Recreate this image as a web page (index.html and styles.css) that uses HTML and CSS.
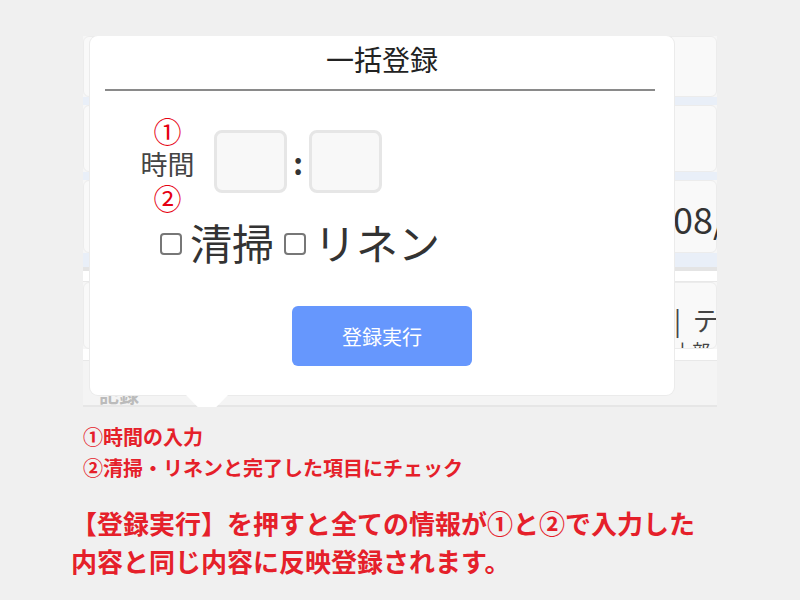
FILE: index.html
```html
<!DOCTYPE html>
<html lang="ja">
<head>
    <meta charset="UTF-8">
    <meta name="viewport" content="width=device-width, initial-scale=1.0">
    <title>一括登録</title>
    <link rel="stylesheet" href="styles.css">
</head>
<body>
    <div class="page">
        <!-- Screen behind the modal -->
        <div class="screen">
            <div class="bg-row"></div>
            <div class="bg-strip"></div>
            <div class="bg-row bg-row-mid"></div>
            <div class="bg-strip"></div>
            <div class="bg-row bg-row-date"><span class="bg-date">08/</span></div>
            <div class="bg-strip bg-strip-wide"></div>
            <div class="bg-gap"></div>
            <div class="bg-row bg-row-text">
                <span class="bg-label">| テ</span>
                <span class="bg-small">上部</span>
            </div>
            <div class="bg-gap"></div>
            <div class="bg-foot"><span class="bg-foot-text">記録</span></div>

            <!-- Bulk registration modal -->
            <div class="modal">
                <h2 class="modal-title">一括登録</h2>
                <div class="modal-line"></div>

                <div class="time-row">
                    <div class="label-col">
                        <span class="num">①</span>
                        <span class="time-label">時間</span>
                        <span class="num num-two">②</span>
                    </div>
                    <div class="time-inputs">
                        <div class="time-box"></div>
                        <span class="colon">:</span>
                        <div class="time-box"></div>
                    </div>
                </div>

                <div class="check-row">
                    <span class="check"></span>
                    <span class="check-label">清掃</span>
                    <span class="check check-second"></span>
                    <span class="check-label">リネン</span>
                </div>

                <div class="button-row">
                    <button class="submit">登録実行</button>
                </div>
            </div>
        </div>

        <div class="notes">
            <p>①時間の入力</p>
            <p>②清掃・リネンと完了した項目にチェック</p>
        </div>

        <div class="summary">
            <p>【登録実行】を押すと全ての情報が①と②で入力した</p>
            <p>内容と同じ内容に反映登録されます。</p>
        </div>
    </div>
</body>
</html>
```

FILE: styles.css
```css
body {
    margin: 0;
    background-color: #f0f0f0;
    font-family: "Noto Sans CJK JP", "Noto Sans", sans-serif;
}
.page {
    padding-top: 36px;
}
p {
    margin: 0;
}

/* background screen */
.screen {
    position: relative;
    margin-left: 83px;
    width: 634px;
    height: 371px;
    background-color: #f6f6f6;
    overflow: hidden;
    display: flex;
    flex-direction: column;
}
.bg-row {
    height: 64px;
    background-color: #f9f9f9;
    border: 1px solid #ececec;
    border-radius: 6px;
    box-sizing: border-box;
}
.bg-row-mid {
    height: 70px;
}
.bg-row-date {
    height: 76px;
    padding-left: 589px;
    padding-top: 4px;
    font-size: 36px;
    line-height: 66px;
    color: #333;
    white-space: nowrap;
}
.bg-strip {
    height: 8px;
    background-color: #e9eff8;
}
.bg-strip-wide {
    height: 18px;
    border-bottom: 4px solid #e4e4e4;
    box-sizing: border-box;
}
.bg-gap {
    height: 12px;
    background-color: #fff;
    border-bottom: 1px solid #e8e8e8;
    box-sizing: border-box;
}
.bg-row-text {
    height: 70px;
    display: flex;
    flex-direction: column;
    padding-left: 590px;
    white-space: nowrap;
    color: #444;
    overflow: hidden;
}
.bg-label {
    font-size: 26px;
    line-height: 26px;
    margin-top: 24px;
    letter-spacing: 3px;
}
.bg-small {
    font-size: 18px;
    line-height: 18px;
    margin-top: 8px;
}
.bg-foot {
    flex: 1;
    background-color: #f4f4f4;
    border-bottom: 2px solid #e6e6e6;
    box-sizing: border-box;
}
.bg-foot-text {
    display: block;
    margin: 24px 0 0 16px;
    font-size: 20px;
    font-weight: bold;
    line-height: 20px;
    color: #bbb;
}

/* modal */
.modal {
    position: absolute;
    left: 7px;
    top: 0;
    width: 584px;
    height: 359px;
    background-color: #fff;
    border-radius: 8px;
    box-shadow: 0 0 0 1px #ebebeb;
}
.modal::after {
    content: "";
    position: absolute;
    left: 96px;
    bottom: -12px;
    width: 42px;
    height: 12px;
    background-color: #fff;
    clip-path: polygon(0 0, 100% 0, 72% 100%, 28% 100%);
}
.modal-title {
    margin: 0;
    padding-top: 4px;
    font-size: 28px;
    font-weight: normal;
    line-height: 38px;
    text-align: center;
    color: #222;
}
.modal-line {
    height: 2px;
    margin: 11px 19px 0 15px;
    background-color: #8a8a8a;
}
.time-row {
    display: flex;
    align-items: flex-start;
    margin-top: 24px;
    padding-left: 49px;
}
.label-col {
    display: flex;
    flex-direction: column;
    align-items: center;
    width: 57px;
}
.num {
    font-size: 28px;
    line-height: 32px;
    color: #e60012;
}
.num-two {
    line-height: 34px;
}
.time-label {
    font-size: 27px;
    line-height: 34px;
    color: #444;
}
.time-inputs {
    display: flex;
    align-items: center;
    margin-left: 18px;
    margin-top: 15px;
}
.time-box {
    width: 73px;
    height: 63px;
    border: 3px solid #e6e6e6;
    border-radius: 8px;
    background-color: #f8f8f8;
    box-sizing: border-box;
}
.colon {
    width: 22px;
    text-align: center;
    font-size: 30px;
    font-weight: bold;
    line-height: 30px;
    color: #333;
}
.check-row {
    display: flex;
    align-items: center;
    padding-left: 70px;
}
.check {
    width: 22px;
    height: 22px;
    border: 2px solid #777;
    border-radius: 4px;
    box-sizing: border-box;
    margin-right: 8px;
    margin-top: 4px;
}
.check-second {
    margin-left: 10px;
}
.check-label {
    font-size: 42px;
    line-height: 54px;
    color: #333;
}
.button-row {
    display: flex;
    justify-content: center;
    margin-top: 37px;
}
.submit {
    width: 180px;
    height: 60px;
    border: none;
    border-radius: 6px;
    background-color: #6697fd;
    color: #fff;
    font-family: "Noto Sans CJK JP", sans-serif;
    font-size: 20px;
}

/* red explanations */
.notes {
    margin-top: 14px;
    padding-left: 83px;
    font-size: 20px;
    font-weight: bold;
    line-height: 31px;
    color: #e5202a;
}
.summary {
    margin-top: 21px;
    padding-left: 71px;
    font-size: 26px;
    font-weight: bold;
    line-height: 38px;
    color: #e5202a;
}
```
